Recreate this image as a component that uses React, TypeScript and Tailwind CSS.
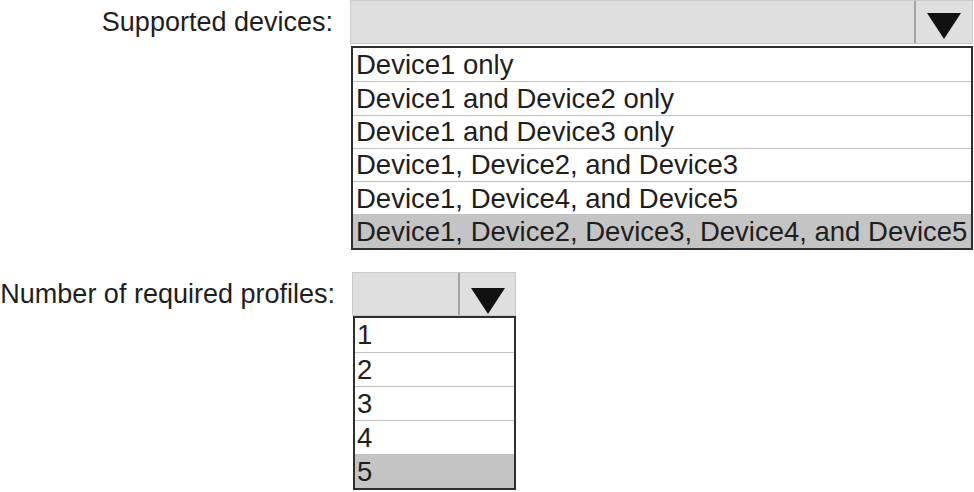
import React from 'react'

const deviceOptions = [
  'Device1 only',
  'Device1 and Device2 only',
  'Device1 and Device3 only',
  'Device1, Device2, and Device3',
  'Device1, Device4, and Device5',
  'Device1, Device2, Device3, Device4, and Device5',
]

const profileOptions = ['1', '2', '3', '4', '5']

function Arrow() {
  return (
    <svg width="34" height="26" viewBox="0 0 34 26">
      <polygon points="0,0 34,0 17,26" fill="#111" />
    </svg>
  )
}

export default function App() {
  return (
    <div className="w-[974px] h-[492px] bg-white text-[#1e1e1e] font-['Liberation_Sans',Arial,sans-serif] text-[27.5px] overflow-hidden">
      {/* Supported devices */}
      <div className="flex">
        <div className="w-[350px] h-[44px] pr-[17px] flex items-center justify-end whitespace-nowrap text-[27px]">Supported devices:</div>
        <div className="w-[623px]">
          <div className="h-[44px] flex bg-[#dfdfdf] border border-[#cacaca]">
            <div className="flex-1" />
            <div className="w-[58px] border-l-2 border-[#a3a3a3] flex justify-center pt-[12px]">
              <Arrow />
            </div>
          </div>
          <div className="mt-[2px] border-2 border-[#2e2e2e] ml-[1px]">
            {deviceOptions.map((opt, i) => (
              <div
                key={opt}
                className={`h-[33.3px] flex items-center pl-[3px] leading-none whitespace-nowrap ${i > 0 ? 'border-t border-[#c2c2c2]' : ''} ${i === deviceOptions.length - 1 ? 'bg-[#c4c4c4]' : 'bg-white'}`}
              >
                {opt}
              </div>
            ))}
          </div>
        </div>
      </div>

      {/* Number of required profiles */}
      <div className="flex mt-[22px]">
        <div className="w-[352px] h-[44px] pr-[17px] flex items-center justify-end whitespace-nowrap text-[27px]">Number of required profiles:</div>
        <div className="w-[164px]">
          <div className="h-[44px] flex bg-[#dfdfdf] border border-[#cacaca]">
            <div className="flex-1" />
            <div className="w-[57px] border-l-2 border-[#a3a3a3] flex justify-center pt-[15px]">
              <Arrow />
            </div>
          </div>
          <div className="border-2 border-[#2e2e2e] ml-[1px]">
            {profileOptions.map((opt, i) => (
              <div
                key={opt}
                className={`h-[34px] flex items-center pl-[2px] leading-none ${i > 0 ? 'border-t border-[#c2c2c2]' : ''} ${i === profileOptions.length - 1 ? 'bg-[#c4c4c4]' : 'bg-white'}`}
              >
                {opt}
              </div>
            ))}
          </div>
        </div>
      </div>
    </div>
  )
}
